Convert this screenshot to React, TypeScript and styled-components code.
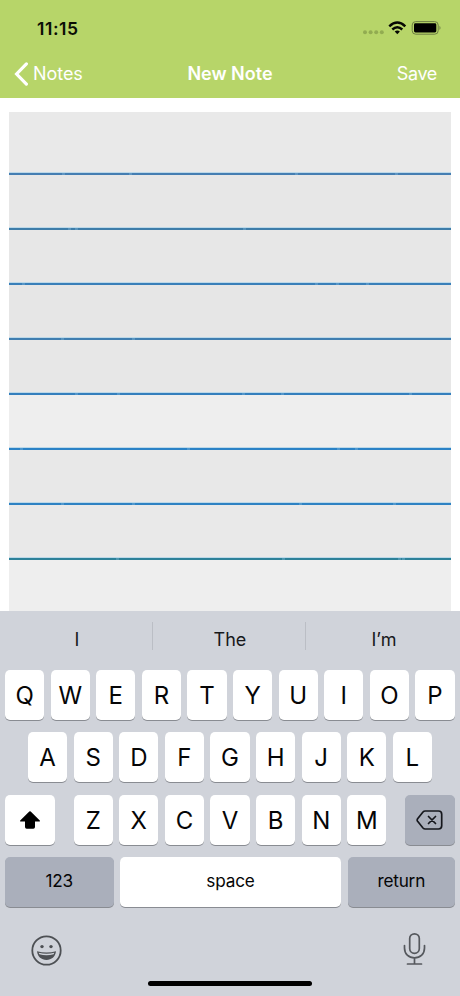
import React from 'react';
import styled, { createGlobalStyle } from 'styled-components';

const Global = createGlobalStyle`
  * { box-sizing: border-box; }
  body { margin: 0; background: #fff; font-family: Inter, "Liberation Sans", sans-serif; }
  button { font: inherit; border: 0; padding: 0; background: none; color: inherit; }
  svg { display: block; flex: none; }
`;

const Screen = styled.div`
  width: 460px;
  height: 996px;
  display: flex;
  flex-direction: column;
  overflow: hidden;
`;

const Header = styled.header`
  height: 98px;
  background: #b7d569;
`;

const StatusBar = styled.div`
  height: 49px;
  padding: 8px 19px 0 37px;
  display: flex;
  align-items: center;
  justify-content: space-between;
`;

const Time = styled.span`
  font-size: 17.5px;
  font-weight: 600;
  letter-spacing: 0.55px;
  margin-top: -1px;
  color: #0a0e05;
`;

const NavBar = styled.nav`
  height: 49px;
  padding: 0 23px 0 14px;
  display: grid;
  grid-template-columns: 1fr auto 1fr;
  align-items: center;
  color: #fff;
  font-size: 18px;
`;

const BackButton = styled.button`
  display: flex;
  align-items: center;
  gap: 5px;
  letter-spacing: -0.05px;
`;

const Title = styled.h1`
  margin: 0;
  padding-right: 9px;
  transform: translateX(9px);
  font-size: 18px;
  font-weight: 600;
  letter-spacing: 0;
`;

const SaveButton = styled.button`
  justify-self: end;
  letter-spacing: -0.35px;
`;

const Paper = styled.main`
  margin: 14px 9px 0;
  height: 499px;
  background: #e8e8e8;
`;

const PaperRow = styled.div<{ $h: number; $bg: string; $line?: string }>`
  height: ${p => p.$h}px;
  display: flex;
  align-items: flex-end;
  background: ${p => p.$bg};
  border-bottom: ${p => (p.$line ? `2px solid ${p.$line}` : '0')};
  box-shadow: ${p => (p.$line ? 'inset 0 -1px 0 #bcd8e8, 0 1px 0 #b9d9ec' : 'none')};
  position: relative;
`;

const Fleck = styled.i<{ $gap: number }>`
  width: 3px;
  height: 2px;
  flex: none;
  margin: 0 0 -2px ${p => p.$gap}px;
  background: #8fc4e2;
  opacity: 0.35;
`;

const Keyboard = styled.section`
  flex: 1;
  background: #d0d3da;
  display: flex;
  flex-direction: column;
  position: relative;
`;

const Suggestions = styled.div`
  height: 59px;
  display: grid;
  grid-template-columns: 152px 153px 155px;
  align-items: center;
  color: #17181b;
  font-size: 18px;
`;

const Suggestion = styled.button`
  height: 28px;
  margin-top: -9px;
  padding: 7px 0 0 2px;
  & + & { border-left: 1px solid #bbbec5; }
`;

const KeyRows = styled.div`
  display: flex;
  flex-direction: column;
  gap: 12.3px;
  padding: 0 5px;
`;

const KeyRow = styled.div<{ $inset?: number; $spread?: boolean }>`
  display: flex;
  gap: 6.3px;
  padding: 0 ${p => p.$inset ?? 0}px;
  justify-content: ${p => (p.$spread ? 'space-between' : 'flex-start')};
`;

const KeyGroup = styled.div`
  display: flex;
  gap: 6.3px;
`;

const Key = styled.button<{ $w?: number; $dark?: boolean; $word?: boolean }>`
  width: ${p => p.$w ?? 39.3}px;
  flex: none;
  height: 50px;
  display: flex;
  align-items: center;
  justify-content: center;
  border-radius: 5px;
  background: ${p => (p.$dark ? '#aaafbb' : '#fff')};
  box-shadow: 0 1px 0 #898c92;
  color: #050506;
  font-size: ${p => (p.$word ? 17.2 : 24)}px;
  padding: ${p => (p.$word ? '0 0 2px' : '1px 0 0')};
  letter-spacing: ${p => (p.$word ? '-0.2px' : '0')};
`;

const BottomBar = styled.div`
  height: 59px;
  display: flex;
  align-items: flex-end;
  justify-content: space-between;
  padding: 0 34px 0 31px;
`;

const HomeIndicator = styled.div`
  width: 164px;
  height: 5.5px;
  margin: 15px auto 0;
  border-radius: 3px;
  background: #000;
`;

const rows = [
  { h: 63, bg: '#e9e9e9', line: '#457eb2', flecks: [53, 64, 163, 97] },
  { h: 55, bg: '#e7e7e7', line: '#3e7da9', flecks: [59, 4, 165] },
  { h: 55, bg: '#e7e7e7', line: '#397fb9', flecks: [13, 290, 18, 27] },
  { h: 55, bg: '#e6e6e6', line: '#407eb0', flecks: [52, 68] },
  { h: 55, bg: '#e7e7e7', line: '#347fbd', flecks: [66, 39, 122, 36, 125] },
  { h: 55, bg: '#eeeeee', line: '#2b82c6', flecks: [11, 164, 147, 15] },
  { h: 55, bg: '#e8e8e8', line: '#2e82c3', flecks: [52, 68, 164, 91] },
  { h: 55, bg: '#e9e9e9', line: '#2d8199', flecks: [107, 163, 113, 1] },
  { h: 51, bg: '#eeeeee', flecks: [] },
];

const StatusIcons = () => (
  <svg width="80" height="18" viewBox="0 0 80 18">
    <g fill="#92ac51">
      <circle cx="4" cy="12.3" r="2" /><circle cx="9.6" cy="12.3" r="2" />
      <circle cx="15.2" cy="12.3" r="2" /><circle cx="20.8" cy="12.3" r="2" />
    </g>
    <g transform="translate(-.7 .8)">
      <g fill="none" stroke="#050703" strokeWidth="2.5">
        <path d="M29 5.5 Q37 -2 45 5.5" />
        <path d="M32 8.7 Q37 4.2 42 8.7" />
      </g>
      <path d="M34.4 10.8 Q37 8.7 39.6 10.8 L37 13.4 Z" fill="#050703" />
    </g>
    <rect x="51.2" y="1.6" width="26" height="12.6" rx="3.5" fill="none" stroke="#6d7d43" />
    <rect x="53" y="3.3" width="22.3" height="9.2" rx="1.4" fill="#000" />
    <path d="M78.5 5.7 Q80.5 7.9 78.5 10.1 Z" fill="#6d7d43" />
  </svg>
);

const Chevron = () => (
  <svg width="14" height="24" viewBox="0 0 14 24" fill="none" stroke="#fff" strokeWidth="3.2">
    <path d="M12.4 1.9 L2.6 12 L12.4 22.1" strokeLinecap="round" strokeLinejoin="miter" />
  </svg>
);

const Shift = () => (
  <svg width="22" height="20" viewBox="0 0 22 20">
    <path d="M10.3 1.5 Q11 .8 11.7 1.5 L20.8 10.4 Q21.5 11.4 20.3 11.4 H16 V17 Q16 18.7 14.3 18.7 H7.7 Q6 18.7 6 17 V11.4 H1.7 Q.5 11.4 1.2 10.4 Z" fill="#000" />
  </svg>
);

const Delete = () => (
  <svg width="27" height="20" viewBox="0 0 27 20" fill="none" stroke="#15171c" strokeWidth="1.7" strokeLinejoin="round" strokeLinecap="round">
    <path d="M9.2 1 H22.5 Q25.7 1 25.7 4.2 V15.8 Q25.7 19 22.5 19 H9.2 Q7.9 19 7 18 L1.6 11.3 Q.7 10 1.6 8.7 L7 2 Q7.9 1 9.2 1 Z" />
    <path d="M12.5 6.5 L19.5 13.5 M19.5 6.5 L12.5 13.5" />
  </svg>
);

const Smile = () => (
  <svg width="31" height="31" viewBox="0 0 31 31">
    <circle cx="15.5" cy="15.5" r="14.2" fill="none" stroke="#4d5054" strokeWidth="1.8" />
    <circle cx="11" cy="11.6" r="1.7" fill="#4d5054" />
    <circle cx="20" cy="11.6" r="1.7" fill="#4d5054" />
    <path d="M6 16.3 Q15.5 18.8 25 16.3 C24.3 21.7 20.6 25 15.5 25 C10.4 25 6.7 21.7 6 16.3 Z" fill="#4d5054" />
    <path d="M7.7 17.8 Q15.5 19.6 23.3 17.8 L22.7 19.2 Q15.5 21.4 8.3 19.2 Z" fill="#d0d3da" />
  </svg>
);

const Mic = () => (
  <svg width="23" height="34" viewBox="0 0 23 34" fill="none" stroke="#55585d" strokeWidth="1.7" strokeLinecap="round">
    <rect x="6.7" y="1.8" width="9.6" height="19.6" rx="4.8" />
    <path d="M1.5 13.5 V16 C1.5 22 5.6 25.9 11.5 25.9 C17.4 25.9 21.5 22 21.5 16 V13.5 M11.5 25.9 V32 M4.5 32 H18.5" />
  </svg>
);

const letters = (s: string) => s.split('').map(c => <Key key={c}>{c}</Key>);

export default function App() {
  return (
    <Screen>
      <Global />
      <Header>
        <StatusBar>
          <Time>11:15</Time>
          <StatusIcons />
        </StatusBar>
        <NavBar>
          <BackButton><Chevron />Notes</BackButton>
          <Title>New Note</Title>
          <SaveButton>Save</SaveButton>
        </NavBar>
      </Header>
      <Paper>
        {rows.map((r, i) => (
          <PaperRow key={i} $h={r.h} $bg={r.bg} $line={r.line}>
            {r.flecks.map((gap, j) => <Fleck key={j} $gap={gap} />)}
          </PaperRow>
        ))}
      </Paper>
      <Keyboard>
        <Suggestions>
          <Suggestion>I</Suggestion>
          <Suggestion>The</Suggestion>
          <Suggestion>I’m</Suggestion>
        </Suggestions>
        <KeyRows>
          <KeyRow>{letters('QWERTYUIOP')}</KeyRow>
          <KeyRow $inset={23}>{letters('ASDFGHJKL')}</KeyRow>
          <KeyRow $spread>
            <Key $w={50}><Shift /></Key>
            <KeyGroup>{letters('ZXCVBNM')}</KeyGroup>
            <Key $w={50} $dark><Delete /></Key>
          </KeyRow>
          <KeyRow $spread>
            <Key $w={108.5} $dark $word>123</Key>
            <Key $w={221} $word>space</Key>
            <Key $w={107.5} $dark $word>return</Key>
          </KeyRow>
        </KeyRows>
        <BottomBar>
          <Smile />
          <Mic />
        </BottomBar>
        <HomeIndicator />
      </Keyboard>
    </Screen>
  );
}
